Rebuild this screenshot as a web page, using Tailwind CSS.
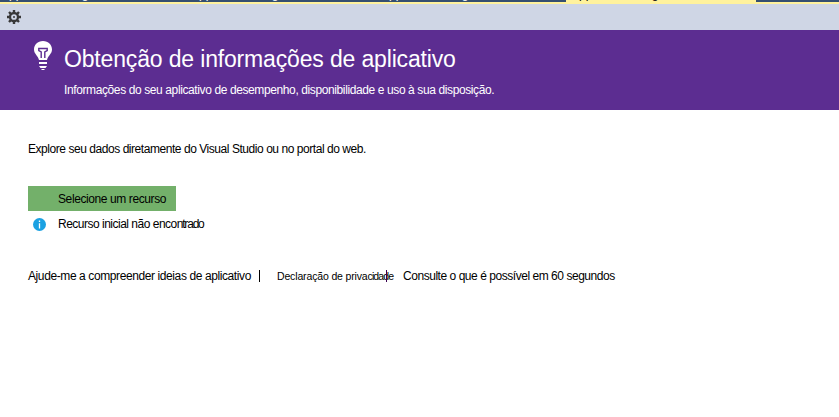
<!DOCTYPE html>
<html lang="pt-BR">
<head>
<meta charset="utf-8">
<title>Application Insights</title>
<script src="https://cdn.jsdelivr.net/npm/@tailwindcss/browser@4"></script>
</head>
<body class="h-[417px] w-[839px] overflow-hidden bg-white font-['Liberation_Sans',sans-serif] text-[12px] leading-4 text-black">
<div class="flex h-0.5 items-end overflow-hidden bg-[#354f70] whitespace-nowrap text-white">
  <div class="flex h-4 w-[186px] shrink-0 items-end pl-px"><span>Application Insig</span></div>
  <div class="flex h-4 w-[190px] shrink-0 items-end pl-[5px]"><span>Application Insig</span></div>
  <div class="flex h-4 w-[190px] shrink-0 items-end pl-[5px]"><span>Application Insig</span></div>
  <div class="flex h-4 w-[190px] shrink-0 items-end bg-[#fff29d] pl-[5px] text-black"><span>Application Insig</span></div>
</div>
<div class="h-0.5 bg-[#fff29d]"></div>
<div class="flex h-[26px] items-center bg-[#cfd6e5] pl-[7px]">
  <svg class="size-3.5" viewBox="0 0 14 14" fill="none" stroke="#383838">
    <circle cx="7" cy="7" r="4" stroke-width="2.300"/>
    <path d="M7 0v2.500M7 11.500V14M0 7h2.500M11.500 7H14M2 2l1.800 1.800M10.200 10.200L12 12M12 2l-1.800 1.800M3.800 10.200L2 12" stroke-width="2.400"/>
    <circle cx="7" cy="7" r="1" fill="#383838" stroke="none"/>
  </svg>
</div>
<header class="flex h-20 bg-[#5c2d91] pl-[33px] text-white">
  <svg class="mt-[11px] h-[30px] w-5 shrink-0" viewBox="0 0 20 30">
    <path d="M10 0C4.600 0 1 3.800 1 8.500C1 13 5 14.500 6 19H14C15 14.500 19 13 19 8.500C19 3.800 15.400 0 10 0Z" fill="#fff"/>
    <path d="M8.200 17V11L5.800 9.500V7.500H14.200V9.500L11.800 11V17" fill="none" stroke="#5c2d91" stroke-width="1.400"/>
    <path d="M6 21H14V23H6ZM6 25H14L12.500 27H7.500ZM8 28H12L11 29H9Z" fill="#fff"/>
  </svg>
  <div class="ml-[11px] whitespace-nowrap">
    <h1 class="mt-[13px] text-[23px] leading-8 tracking-[-0.16px]">Obtenção de informações de aplicativo</h1>
    <p class="mt-[7px] tracking-[-0.39px]">Informações do seu aplicativo de desempenho, disponibilidade e uso à sua disposição.</p>
  </div>
</header>
<main class="pt-[31px] pl-7 whitespace-nowrap">
  <p class="tracking-[-0.45px]">Explore seu dados diretamente do Visual Studio ou no portal do web.</p>
  <button class="mt-[29px] flex h-[25px] w-[148px] items-center bg-[#73b06a] pl-[30px]"><span class="tracking-[-0.4px]">Selecione um recurso</span></button>
  <div class="mt-[5px] flex h-4 items-center pl-[5px]">
    <svg class="mt-px size-[13px]" viewBox="0 0 13 13"><circle cx="6.500" cy="6.500" r="6.500" fill="#1ba1e2"/><path d="M6.500 2.500V4M6.500 5.200V10.500" stroke="#fff" stroke-width="1.300"/></svg>
    <span class="ml-3 tracking-[-0.5px]">Recurso inicial não enco<span class="tracking-[-1.2px]">ntrado</span></span>
  </div>
  <div class="mt-9 flex h-4 items-center">
    <a class="w-[231px] tracking-[-0.4px]">Ajude-me a compreender ideias de aplicativo</a>
    <i class="h-3 w-px bg-black"></i>
    <a class="ml-[17px] w-[109px] text-[10.5px] tracking-[-0.15px]">Declaração de priva<span class="tracking-[-0.9px]">cidade</span></a>
    <i class="h-3 w-px bg-[#3b0050]"></i>
    <a class="ml-4 tracking-[-0.46px]">Consulte o que é possível em 60 segundos</a>
  </div>
</main>
</body>
</html>
